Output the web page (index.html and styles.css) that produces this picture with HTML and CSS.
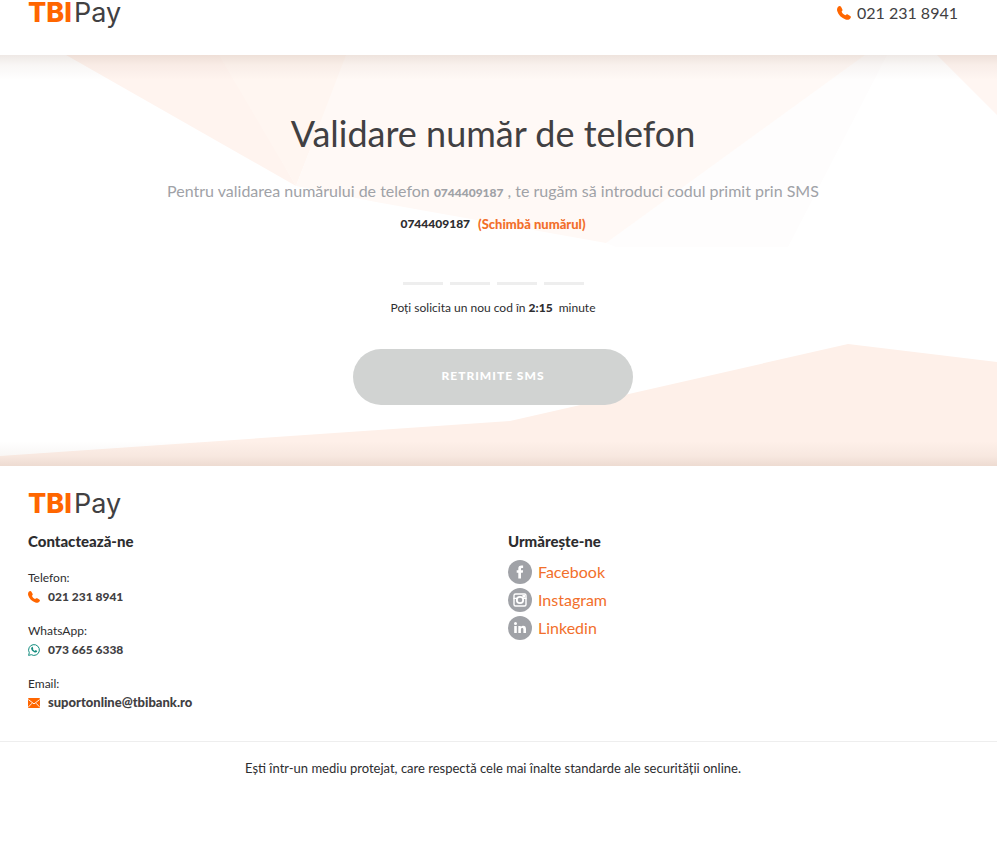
FILE: index.html
```html
<!doctype html>
<html lang="ro">
  <head>
    <meta charset="utf-8" />
    <meta name="viewport" content="width=device-width, initial-scale=1" />
    <title>TBI Pay - Validare număr de telefon</title>
    <link rel="stylesheet" href="styles.css">
  </head>
  <body>
    <!-- shared icons -->
    <svg class="sprite" aria-hidden="true">
      <symbol id="icon-phone" viewBox="0 0 14 14">
        <path d="M.9 1C2-.2 3.300-.2 4 .8L5.300 3.200c.4.8.2 1.400-.4 2l-.3.400c.5 1.700 1.900 3 3.700 3.700l.5-.4c.6-.6 1.300-.7 2-.3l2.400 1.400c.9.6 1 1.400.2 2.200-1.200 1.500-2.900 2-4.800 1.200C4.500 12 1.300 8.900.2 5-.2 3.300.1 2 .9 1z" />
      </symbol>
    </svg>

    <header class="header">
      <div class="container header-row">
        <a class="logo" href="#"><b>TBI</b>Pay</a>
        <a class="header-phone" href="tel:0212318941">
          <svg class="icon-phone" width="14" height="14"><use href="#icon-phone" /></svg>
          021 231 8941
        </a>
      </div>
    </header>

    <main class="hero">
      <svg class="hero-bg" viewBox="0 0 997 411" preserveAspectRatio="none" aria-hidden="true">
        <path fill="#fefdfd" d="M865 0h22l-99 192H616l-10-4z" />
        <path fill="#fff4ef" d="M66 0h156l74 131z" />
        <path fill="#fff6f1" d="M219 0h128l-51 131z" />
        <path fill="#fff9f6" d="M346 0h519L606 188 376 147l-80-16z" />
        <path fill="#fff6f2" d="M937 0h60v60z" />
        <path fill="#fef0e9" d="M0 401l510-35 338-77 149 18v104H0z" />
      </svg>
      <form class="container validate">
        <h1>Validare număr de telefon</h1>
        <p class="lead">
          Pentru validarea numărului de telefon <b>0744409187</b> , te rugăm să introduci codul primit prin SMS
        </p>
        <p class="number"><span>0744409187</span><a href="#">(Schimbă numărul)</a></p>
        <div class="code">
          <input type="text" inputmode="numeric" maxlength="1" aria-label="Cifra 1" />
          <input type="text" inputmode="numeric" maxlength="1" aria-label="Cifra 2" />
          <input type="text" inputmode="numeric" maxlength="1" aria-label="Cifra 3" />
          <input type="text" inputmode="numeric" maxlength="1" aria-label="Cifra 4" />
        </div>
        <p class="timer">Poți solicita un nou cod în <b>2:15</b> &nbsp;minute</p>
        <button class="resend" type="button" disabled>RETRIMITE SMS</button>
      </form>
    </main>

    <footer class="footer">
      <div class="container">
        <a class="logo" href="#"><b>TBI</b>Pay</a>
        <div class="columns">
          <section>
            <h2>Contactează-ne</h2>
            <dl class="contact">
              <dt>Telefon:</dt>
              <dd>
                <svg class="icon-phone" width="12" height="12"><use href="#icon-phone" /></svg>
                <a href="tel:0212318941">021 231 8941</a>
              </dd>
              <dt>WhatsApp:</dt>
              <dd>
                <svg width="12" height="12" viewBox="0 0 12 12" fill="none" stroke="#128c7e">
                  <path d="M.6 11.400l.7-2.700A5.400 5.400 0 1 1 3.300 10.700z" />
                  <path fill="#128c7e" stroke="none" d="M3.700 3.200c.5-.5.9-.4 1.100.1l.4.9c.1.300-.1.500-.4.900.4.800 1 1.400 1.900 1.800l.6-.6c.2-.2.400-.2.600-.1l1 .5c.4.200.4.600.1 1-.6.9-1.700 1-2.800.5C4.800 7.600 3.800 6.500 3.300 5.300c-.3-.9-.2-1.600.4-2.100z" />
                </svg>
                <a href="https://wa.me/40736656338">073 665 6338</a>
              </dd>
              <dt>Email:</dt>
              <dd>
                <svg width="12" height="12" viewBox="0 0 12 12">
                  <rect y="1" width="12" height="10" rx="1" fill="#ff6600" />
                  <path fill="none" stroke="#fff" stroke-width=".9" d="M.3 2.500L6 6.900l5.700-4.400M.5 9.900L4 6.200M11.500 9.900L8 6.200" />
                </svg>
                <a class="mail" href="mailto:suportonline@tbibank.ro">suportonline@tbibank.ro</a>
              </dd>
            </dl>
          </section>
          <section>
            <h2>Urmărește-ne</h2>
            <ul class="social">
              <li>
                <a href="#">
                  <svg width="24" height="24" viewBox="0 0 24 24">
                    <circle cx="12" cy="12" r="12" fill="#a0a2a7" />
                    <path fill="#fff" d="M10.300 18.500V12.700H8.700V10.200h1.600V8.700c0-2.100 1.100-3.200 3.100-3.200h1.700v2.500h-1.100c-.7 0-1 .3-1 1v1.200h2.100l-.3 2.500H13v5.800z" />
                  </svg>
                  Facebook
                </a>
              </li>
              <li>
                <a href="#">
                  <svg width="24" height="24" viewBox="0 0 24 24">
                    <circle cx="12" cy="12" r="12" fill="#a0a2a7" />
                    <g fill="none" stroke="#fff">
                      <rect x="6" y="6" width="12" height="12" rx="1.500" stroke-width="1.400" />
                      <path d="M5.500 10.300h4M14.500 10.300h4" stroke-width="1.200" />
                      <circle cx="12" cy="12" r="3.200" stroke-width="1.800" />
                    </g>
                    <path fill="#fff" d="M14.400 7h2.600v2.600h-2.600z" />
                  </svg>
                  Instagram
                </a>
              </li>
              <li>
                <a href="#">
                  <svg width="24" height="24" viewBox="0 0 24 24">
                    <circle cx="12" cy="12" r="12" fill="#a0a2a7" />
                    <circle cx="7.500" cy="7.500" r="1.500" fill="#fff" />
                    <path fill="#fff" d="M6.200 10h2.600v7H6.200zM10.300 10h2.500v1c.5-.8 1.300-1.200 2.300-1.200 2 0 2.900 1.200 2.900 3.300V17h-2.600v-3.500c0-1-.4-1.500-1.200-1.500-.9 0-1.300.6-1.300 1.600V17h-2.600z" />
                  </svg>
                  Linkedin
                </a>
              </li>
            </ul>
          </section>
        </div>
      </div>
      <p class="secure">Ești într-un mediu protejat, care respectă cele mai înalte standarde ale securității online.</p>
    </footer>
  </body>
</html>
```
FILE: styles.css
```css
:root {
  --orange: #ff6600;
  --link: #f26f2b;
  --text: #2d2d2f;
  --dark: #414042;
  --grey: #a0a2a7;
}

* {
  box-sizing: border-box;
}

body {
  margin: 0;
  font-family: Lato, 'Liberation Sans', sans-serif;
  font-size: 12px;
  line-height: 16px;
  color: var(--text);
  background: #fff;
}

h1,
h2,
p,
dl,
dd,
ul {
  margin: 0;
  padding: 0;
}

a {
  color: var(--link);
  text-decoration: none;
}

.sprite {
  display: none;
}

.icon-phone {
  fill: var(--orange);
}

.container {
  padding: 0 39px 0 28px;
}

.header {
  height: 55px;
}

.header-row {
  display: flex;
  justify-content: space-between;
  align-items: flex-start;
}

.logo {
  display: block;
  font-family: Inter, sans-serif;
  font-size: 27px;
  line-height: 26px;
  color: var(--dark);
}

.logo b {
  margin-right: 2px;
  font-weight: 800;
  color: var(--orange);
}

.header-phone {
  display: flex;
  align-items: center;
  gap: 6px;
  font-size: 16px;
  line-height: 26px;
  color: var(--dark);
}

/* Validation form */
.hero {
  position: relative;
}

.hero-bg {
  position: absolute;
  inset: 0;
  width: 100%;
  height: 100%;
}

/* soft shade under the header and above the footer */
.hero::before,
.hero::after {
  content: '';
  position: absolute;
  left: 0;
  right: 0;
  z-index: 1;
  height: 25px;
  background: linear-gradient(rgba(90, 35, 0, 0.1), rgba(90, 35, 0, 0.04) 40%, rgba(90, 35, 0, 0));
}

.hero::before {
  top: 0;
}

.hero::after {
  bottom: 0;
  transform: rotate(180deg);
}

.validate {
  position: relative;
  display: flex;
  flex-direction: column;
  align-items: center;
  padding-top: 54px;
  padding-bottom: 61px;
  text-align: center;
}

h1 {
  font-size: 36px;
  font-weight: 400;
  line-height: 48px;
  color: var(--dark);
}

.lead {
  margin-top: 22px;
  font-size: 16px;
  line-height: 24px;
  color: var(--grey);
}

.lead b {
  font-size: 12px;
  font-weight: 900;
}

.number {
  display: flex;
  gap: 8px;
  margin-top: 11px;
  font-weight: 900;
}

.number a {
  font-size: 13px;
}

.code {
  display: flex;
  gap: 7px;
  margin-top: 21px;
}

.code input {
  width: 40px;
  height: 32px;
  padding: 0;
  border: 0;
  border-bottom: 3px solid #eee;
  font: inherit;
  font-size: 20px;
  text-align: center;
  background: none;
  outline: none;
}

.timer {
  margin-top: 15px;
}

.timer b {
  font-weight: 900;
}

.resend {
  width: 280px;
  height: 56px;
  margin-top: 33px;
  padding: 0 0 2px;
  border: 0;
  border-radius: 28px;
  font: 900 12px/16px Lato, sans-serif;
  letter-spacing: 1px;
  color: #fff;
  background: #d1d3d2;
}

/* Footer */
.footer {
  padding-top: 25px;
}

.columns {
  display: grid;
  grid-template-columns: 1fr 1fr;
  gap: 30px;
  margin-top: 14px;
}

h2 {
  font-size: 15px;
  font-weight: 900;
  line-height: 20px;
}

.contact {
  margin-top: 17px;
}

.contact dt,
.contact dd {
  line-height: 19px;
}

.contact dd {
  display: flex;
  align-items: center;
  gap: 8px;
  margin-bottom: 15px;
}

.contact dd a {
  font-weight: 900;
  color: var(--dark);
}

.contact dd .mail {
  font-size: 13px;
}

.social {
  display: grid;
  gap: 4px;
  margin-top: 9px;
  list-style: none;
}

.social a {
  display: flex;
  align-items: center;
  gap: 6px;
  width: max-content;
  font-size: 16px;
  line-height: 24px;
}

.secure {
  margin-top: 14px;
  padding: 18px 39px 18px 28px;
  border-top: 1px solid #eee;
  font-size: 13px;
  text-align: center;
}
```
